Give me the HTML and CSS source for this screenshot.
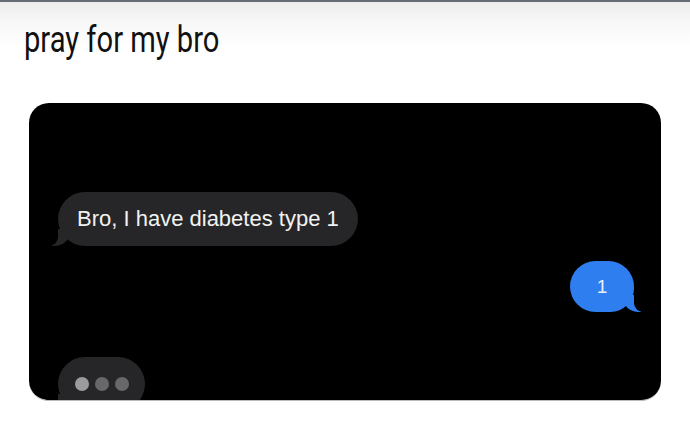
FILE: index.html
```html
<!DOCTYPE html>
<html lang="en">

<head>
    <meta charset="UTF-8">
    <meta name="viewport" content="width=device-width, initial-scale=1.0">
    <title>pray for my bro</title>
    <link rel="stylesheet" href="styles.css">
</head>

<body>
    <div class="top-bar"></div>
    <div class="post">
        <h1 class="post-title">pray for my bro</h1>

        <div class="chat">
            <div class="bubble from-them">Bro, I have diabetes type 1</div>
            <div class="bubble from-me">1</div>
            <div class="bubble from-them typing">
                <span class="dot dot-first"></span>
                <span class="dot"></span>
                <span class="dot"></span>
            </div>
        </div>
    </div>
</body>

</html>
```

FILE: styles.css
```css
body {
    margin: 0;
    background-color: #fff;
    font-family: "Liberation Sans", Arial, sans-serif;
}

.top-bar {
    height: 2px;
    background-color: #676b73;
}

.post {
    padding: 0 29px 0 29px;
    background: linear-gradient(to bottom, #ececec 0px, #f7f7f7 20px, #fff 44px);
}

.post-title {
    margin: 0 0 42px -5px;
    padding-top: 17px;
    height: 42px;
    font-family: Roboto, sans-serif;
    font-weight: 400;
    font-size: 36px;
    line-height: 42px;
    color: #111;
    transform: scaleX(0.81);
    transform-origin: left top;
    white-space: nowrap;
}

/* chat card */
.chat {
    height: 298px;
    background-color: #000;
    border-radius: 20px;
    border-bottom: 1px solid #bbb;
    box-sizing: border-box;
    overflow: hidden;
    padding: 0 27px 0 29px;
    display: flex;
    flex-direction: column;
}

.bubble {
    position: relative;
    box-sizing: border-box;
    display: flex;
    align-items: center;
    justify-content: center;
    flex-shrink: 0;
}

/* tails, the usual imessage trick */
.bubble::before,
.bubble::after {
    content: "";
    position: absolute;
    bottom: 0;
    height: 17px;
}

.from-them {
    align-self: flex-start;
    background-color: #262628;
    color: #f2f2f2;
    margin-top: 89px;
    height: 54px;
    padding: 0 19px;
    border-radius: 27px;
    font-size: 22px;
}

.from-them::before {
    left: -6px;
    border-left: 18px solid #262628;
    border-bottom-right-radius: 16px 14px;
}

.from-them::after {
    left: -12px;
    width: 12px;
    background-color: #000;
    border-bottom-right-radius: 9px;
}

.from-me {
    align-self: flex-end;
    background-color: #2f7ef0;
    color: #e9f0fc;
    margin-top: 15px;
    width: 64px;
    height: 51px;
    border-radius: 26px 26px 24px 26px;
    font-size: 19px;
}

.from-me::before {
    right: -7px;
    border-right: 18px solid #2f7ef0;
    border-bottom-left-radius: 16px 14px;
}

.from-me::after {
    right: -13px;
    width: 13px;
    background-color: #000;
    border-bottom-left-radius: 9px;
}

.typing {
    margin-top: 45px;
    width: 87px;
    height: 54px;
    gap: 6px;
    justify-content: flex-start;
    padding: 0 0 1px 17px;
}

.dot {
    width: 14px;
    height: 14px;
    border-radius: 50%;
    background-color: #68686b;
}

.dot-first {
    background-color: #9b9b9e;
}
```
